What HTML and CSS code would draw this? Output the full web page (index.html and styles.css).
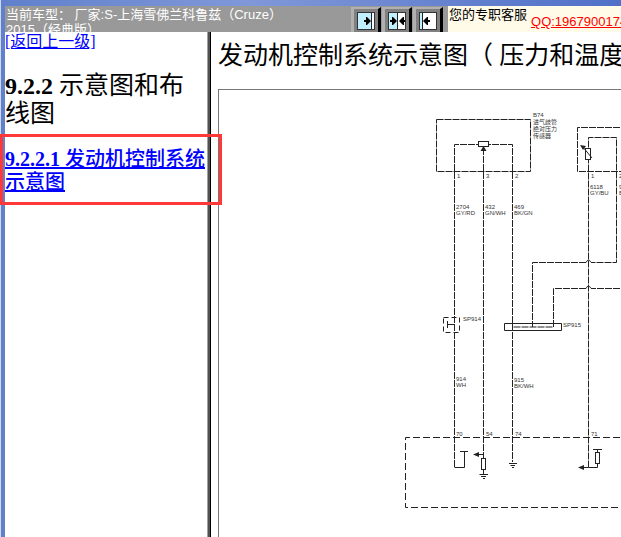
FILE: index.html
```html
<!DOCTYPE html>
<html lang="zh-CN">
<head>
  <meta charset="UTF-8" />
  <meta name="viewport" content="width=device-width, initial-scale=1.0" />
  <title>发动机控制系统示意图</title>
  <link rel="stylesheet" href="styles.css">
</head>
<body>
  <div class="window">
    <header class="topbar">
      <div class="model">当前车型： 厂家:S-上海雪佛兰科鲁兹（Cruze） <span class="nowrap">2015（经典版）</span></div>
      <div class="toolbar">
        <button type="button" class="tool" aria-label="展开目录">
          <svg width="18" height="18" viewBox="0 0 18 18">
            <rect x="0.5" y="0.5" width="17" height="17" fill="#c0f0ff" stroke="#333" />
            <path d="M14 1h3v16h-3z" fill="#fff" />
            <path d="M14.5 1v16" stroke="#222" />
            <path d="M7 8h2V5h1l4 4-4 4H9v-3H7z" fill="#000" />
          </svg>
        </button>
        <button type="button" class="tool" aria-label="平分窗口">
          <svg width="18" height="18" viewBox="0 0 18 18">
            <rect x="0.5" y="0.5" width="17" height="17" fill="#fff" stroke="#333" />
            <path d="M1 1h8v16H1z" fill="#c0f0ff" />
            <path d="M9.5 1v16" stroke="#222" />
            <path d="M2 8h2V5h1l4 4-4 4H4v-3H2zM17 8h-1V5h-1l-4 4 4 4h1v-3h1z" fill="#000" />
          </svg>
        </button>
        <button type="button" class="tool" aria-label="收起目录">
          <svg width="18" height="18" viewBox="0 0 18 18">
            <rect x="0.5" y="0.5" width="17" height="17" fill="#fff" stroke="#333" />
            <path d="M1 1h2v16H1z" fill="#c0f0ff" />
            <path d="M3.5 1v16" stroke="#222" />
            <path d="M11 8H9V5H8L4 9l4 4h1v-3h2z" fill="#000" />
          </svg>
        </button>
      </div>
      <div class="service">
        <span>您的专职客服</span>
        <a href="#qq">QQ:1967900174</a>
      </div>
    </header>

    <div class="frames">
      <nav class="sidebar">
        <a class="back" href="#up">[返回上一级]</a>
        <h2 class="chapter">9.2.2 <span class="zh">示意图和布线图</span></h2>
        <h3 class="section"><a href="#diagram">9.2.2.1 <span class="zh">发动机控制系统示意图</span></a></h3>
      </nav>

      <main class="content">
        <h1 class="title">发动机控制系统示意图（ 压力和温度传感器）</h1>
        <div class="sheet" id="diagram">
          <!-- drawing units are page pixels, origin shifted to the sheet corner -->
          <svg class="wiring" width="640" height="560" viewBox="219 90 640 560">
            <g class="wire">
              <path d="M436.500 119.500H530.500V171.500H436.500z" />
              <path d="M454.500 467V144.500H512.500V462" />
              <path d="M483.500 148V458" />
              <path d="M700 127.500H577.500V171.500H700" />
              <path d="M588.500 467.500V137.500H616.500V262.500H591M586 262.500H532.500V327" />
              <path d="M700 288.500H591M586 288.500H553.500V327H512.500" />
              <path d="M586 262.500q2.500-5 5 0M586 288.500q2.500-5 5 0" />
            </g>
            <g class="part">
              <rect x="478.500" y="141.500" width="10" height="5" />
              <rect x="585.500" y="148.500" width="5" height="11" />
              <rect x="481.500" y="458.500" width="4" height="11" />
              <rect x="595.500" y="452.500" width="4" height="11" />
              <path d="M582 146l10 12" />
              <path d="M479.500 474.500H488M481 476.500H486M483 478.500H485" />
              <path d="M509 463.500H517M510.500 465.500H515M512 467.500H514" />
              <path d="M447 324.500H454M447.500 321V328" />
            </g>
            <g class="lead">
              <path d="M504.500 323.500H561.500V330.500H504.500z" />
              <path d="M454.500 467.500H464.500V451.500M460 451.500H468" />
              <path d="M483.500 454.500H477M483.500 469V474" />
              <path d="M588.500 467.500H582M588.500 467.500H597.500V463M597.500 453V449.500M593 449.500H602" />
            </g>
            <g class="tip">
              <path d="M483.500 146l3 5h-6z" />
              <path d="M580 145l6 1-3 4z" />
              <path d="M473 454.500l6-2.500v5z" />
              <path d="M578 467.500l6-2.500v5z" />
            </g>
            <rect class="splice" x="443.500" y="317.500" width="16" height="15" />
            <path class="module" d="M700 437.500H405.500V507.500H700" />
            <g class="label">
              <text x="533" y="117">B74</text>
              <text x="533" y="124">进气歧管</text>
              <text x="533" y="131">绝对压力</text>
              <text x="533" y="138">传感器</text>
              <text x="457" y="178">1</text>
              <text x="486" y="178">3</text>
              <text x="515" y="178">2</text>
              <text x="591" y="178">1</text>
              <text x="619" y="178">2</text>
              <text x="590" y="189">6118</text>
              <text x="590" y="195">GY/BU</text>
              <text x="619" y="189">919</text>
              <text x="619" y="195">BK/BU</text>
              <text x="456" y="209">2704</text>
              <text x="456" y="215">GY/RD</text>
              <text x="485" y="209">432</text>
              <text x="485" y="215">GN/WH</text>
              <text x="514" y="209">469</text>
              <text x="514" y="215">BK/GN</text>
              <text x="463" y="321">SP914</text>
              <text x="563" y="327">SP915</text>
              <text x="456" y="381">914</text>
              <text x="456" y="387">WH</text>
              <text x="514" y="382">915</text>
              <text x="514" y="388">BK/WH</text>
              <text x="456" y="436">70</text>
              <text x="486" y="436">54</text>
              <text x="515" y="436">74</text>
              <text x="591" y="436">71</text>
            </g>
          </svg>
        </div>
      </main>
    </div>
    <div class="marker"></div>
  </div>
</body>
</html>
```

FILE: styles.css
```css
* {
  box-sizing: border-box;
}
body {
  margin: 0;
  font-family: "Liberation Serif", "Noto Sans CJK SC", serif;
  color: #000;
}
.window {
  position: relative;
  display: flex;
  flex-direction: column;
  height: 100vh;
  overflow: hidden;
  padding: 6px 0 0 5px;
  background: linear-gradient(to right, #6080cc, #8098d8 40%, #5070c8);
  box-shadow: inset 1px 0 #d0d8f0;
}
.topbar {
  display: flex;
  height: 26px;
  flex-shrink: 0;
  overflow: hidden;
  background: #999;
  font-family: "Liberation Sans", "Noto Sans CJK SC", sans-serif;
  font-size: 13px;
  line-height: 15px;
}
.model {
  width: 346px;
  flex-shrink: 0;
  padding: 1px 0 0 1px;
  color: #fff;
}
.nowrap {
  white-space: nowrap;
}
.toolbar {
  display: flex;
  flex-shrink: 0;
  gap: 1px;
  padding: 1px 5px 0 0;
  background: #999;
}
.tool {
  width: 30px;
  height: 26px;
  padding: 0 0 0 3px;
  border: solid #b0b0b0;
  border-width: 2px 3px 0 3px;
  border-right-color: #000;
  background: #808080;
  cursor: pointer;
}
.tool svg {
  display: block;
}
.service {
  display: flex;
  flex: 1;
  gap: 4px;
  padding: 1px 0 0 1px;
  background: #fffbe8;
  white-space: nowrap;
  overflow: hidden;
}
.service a {
  padding-top: 7px;
  color: #f00;
}
.frames {
  display: flex;
  flex: 1;
  min-height: 0;
  background: #fff;
}
.sidebar {
  width: 206px;
  flex-shrink: 0;
  padding-right: 4px;
  border-right: 1px solid #000;
  box-shadow: inset -2px 0 #505050, inset -3px 0 #a0a0a0;
}
.sidebar a {
  color: #00f;
}
.back {
  display: block;
  font-size: 16px;
  line-height: 20px;
}
.chapter {
  margin: 20px 0;
  font-size: 24px;
  line-height: 27px;
}
.chapter .zh {
  font-size: 25px;
  font-weight: normal;
}
.section {
  margin: 0;
  font-size: 20px;
  line-height: 23px;
}
.section .zh {
  font-weight: 500;
}
.content {
  flex: 1;
  min-width: 0;
  padding: 9px 0 0 7px;
  overflow: hidden;
}
.title {
  margin: 0 0 19px;
  font-size: 25px;
  font-weight: normal;
  line-height: 29px;
  white-space: nowrap;
}
.sheet {
  border: 1px solid #777;
  border-right: 0;
  overflow: hidden;
}
.wiring {
  display: block;
}
.wire {
  fill: none;
  stroke: #222;
  stroke-dasharray: 7 1;
}
.part {
  fill: #fff;
  stroke: #222;
}
.lead {
  fill: none;
  stroke: #222;
}
.tip {
  fill: #222;
}
.splice {
  fill: none;
  stroke: #222;
  stroke-dasharray: 5 3;
}
.module {
  fill: none;
  stroke: #222;
  stroke-dasharray: 7 3;
}
.label {
  fill: #333;
  font-family: "Liberation Sans", "Noto Sans CJK SC", sans-serif;
  font-size: 6px;
}
/* red frame laid over the current section */
.marker {
  position: absolute;
  top: 134px;
  left: 0;
  width: 222px;
  height: 71px;
  border: 3px solid #ff3838;
  pointer-events: none;
}
```
